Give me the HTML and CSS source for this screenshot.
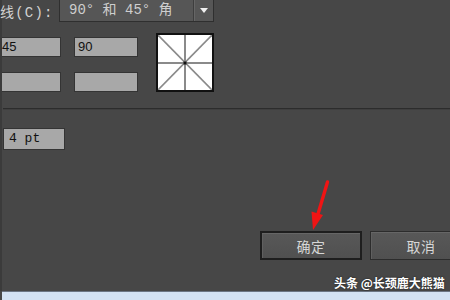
FILE: index.html
```html
<!DOCTYPE html>
<html>
<head>
<meta charset="utf-8">
<link rel="stylesheet" href="styles.css">
</head>
<body>
<div class="screen">
  <div class="dialog">
    <div class="top-row">
      <span class="label">线(C):</span>
      <div class="select">
        <span class="select-text">90° 和 45° 角</span>
        <span class="select-btn"><span class="tri"></span></span>
      </div>
    </div>
    <div class="grid-row">
      <div class="fields">
        <div class="field-row">
          <div class="field f1">45</div>
          <div class="field f2">90</div>
        </div>
        <div class="field-row">
          <div class="field f1"></div>
          <div class="field f2"></div>
        </div>
      </div>
      <div class="preview">
        <svg width="54" height="55" viewBox="0 0 54 55">
          <line x1="0" y1="0" x2="54" y2="55" stroke="#8a8a8a" stroke-width="1.6"/>
          <line x1="54" y1="0" x2="0" y2="55" stroke="#8a8a8a" stroke-width="1.6"/>
          <line x1="27" y1="0" x2="27" y2="55" stroke="#8a8a8a" stroke-width="2"/>
          <line x1="0" y1="28" x2="54" y2="28" stroke="#8a8a8a" stroke-width="2"/>
          <rect x="25.5" y="26.5" width="3" height="3" fill="#111"/>
        </svg>
      </div>
    </div>
    <div class="sep"></div>
    <div class="pt-row">
      <div class="field pt">4 pt</div>
    </div>
    <div class="btn-row">
      <div class="btn primary">确定</div>
      <div class="btn">取消</div>
    </div>
    <div class="watermark">头条 @长颈鹿大熊猫</div>
    <svg class="arrow" width="450" height="300" viewBox="0 0 450 300">
      <line x1="327.5" y1="182" x2="318" y2="214" stroke="#f01414" stroke-width="3.4" stroke-linecap="round"/>
      <polygon points="313,230 311.5,211.5 323,215" fill="#f01414"/>
    </svg>
  </div>
  <div class="taskbar"></div>
</div>
</body>
</html>
```

FILE: styles.css
```css
html, body {
  margin: 0;
  padding: 0;
  background: #474747;
  overflow: hidden;
}
.screen {
  width: 450px;
  height: 300px;
  display: flex;
  flex-direction: column;
  overflow: hidden;
}
.dialog {
  position: relative;
  height: 292px;
  border-left: 2px solid #3b3b3b;
  background: #474747;
  display: flex;
  flex-direction: column;
  box-sizing: border-box;
}
.top-row {
  display: flex;
  align-items: center;
  height: 22px;
  margin-left: -2px;
}
.label {
  font-family: "Liberation Mono", "Noto Sans CJK SC", monospace;
  font-size: 14px;
  letter-spacing: 1.2px;
  color: #d2d2d2;
  width: 59px;
  white-space: nowrap;
}
.select {
  display: flex;
  align-items: stretch;
  width: 155px;
  height: 24px;
  margin-top: -2px;
  box-sizing: border-box;
  border: 1px solid #2f2f2f;
  background: #565656;
  box-shadow: inset 0 1px 0 #666;
}
.select-text {
  flex: 1;
  font-family: "Liberation Mono", "Noto Sans CJK SC", monospace;
  font-size: 14px;
  color: #cecece;
  padding-left: 9px;
  line-height: 23px;
  white-space: pre;
}
.select-btn {
  width: 19px;
  border-left: 1px solid #3e3e3e;
  box-shadow: inset 1px 0 0 #666;
  display: flex;
  align-items: center;
  justify-content: center;
  padding-top: 1px;
}
.tri {
  width: 0;
  height: 0;
  border-left: 4px solid transparent;
  border-right: 4px solid transparent;
  border-top: 5px solid #f0f0f0;
}
.grid-row {
  display: flex;
  align-items: flex-start;
  margin-top: 11px;
}
.fields {
  display: flex;
  flex-direction: column;
  gap: 15px;
  padding-top: 4px;
}
.field-row {
  display: flex;
  gap: 13px;
}
.field {
  box-sizing: border-box;
  height: 20px;
  background: #a8a8a8;
  border: 1px solid #343434;
  font-family: "Liberation Sans", Arial, sans-serif;
  font-size: 13px;
  line-height: 18px;
  color: #111;
}
.f1 {
  width: 59px;
  border-left: none;
  padding-left: 0;
}
.f2 {
  width: 64px;
  padding-left: 3px;
}
.preview {
  margin-left: 18px;
  width: 58px;
  height: 59px;
  box-sizing: border-box;
  border: 2px solid #111;
  background: #fff;
  display: flex;
}
.preview svg {
  display: block;
}
.sep {
  margin-top: 16px;
  height: 1px;
  background: #2c2c2c;
  border-bottom: 1px solid #3f3f3f;
  margin-left: 1px;
}
.pt-row {
  display: flex;
  margin-top: 18px;
  padding-left: 1px;
}
.pt {
  width: 62px;
  height: 22px;
  font-family: "Liberation Mono", monospace;
  font-size: 13px;
  line-height: 20px;
  padding-left: 5px;
}
.btn-row {
  display: flex;
  gap: 8px;
  margin-top: 81px;
  padding-left: 258px;
}
.btn {
  flex: none;
  box-sizing: border-box;
  width: 102px;
  height: 29px;
  border: 1px solid #2c2c2c;
  background: linear-gradient(#585858, #505050);
  box-shadow: inset 0 1px 0 #666, inset 1px 0 0 #606060;
  font-family: "Noto Sans CJK SC", sans-serif;
  font-size: 14px;
  color: #d6d6d6;
  display: flex;
  align-items: center;
  justify-content: center;
  letter-spacing: 0.5px;
}
.btn.primary {
  border: 2px solid #1e1e1e;
}
.watermark {
  position: absolute;
  left: 332px;
  top: 274px;
  font-family: "Noto Sans CJK SC", sans-serif;
  font-size: 12px;
  font-weight: 700;
  color: #fff;
  white-space: nowrap;
  text-shadow: 0 0 2px rgba(0,0,0,0.7);
}
.arrow {
  position: absolute;
  left: -2px;
  top: 0;
  pointer-events: none;
}
.taskbar {
  height: 8px;
  border-top: 1px solid #6c7684;
  background: #d3e2f3;
  margin-left: 2px;
}
```
